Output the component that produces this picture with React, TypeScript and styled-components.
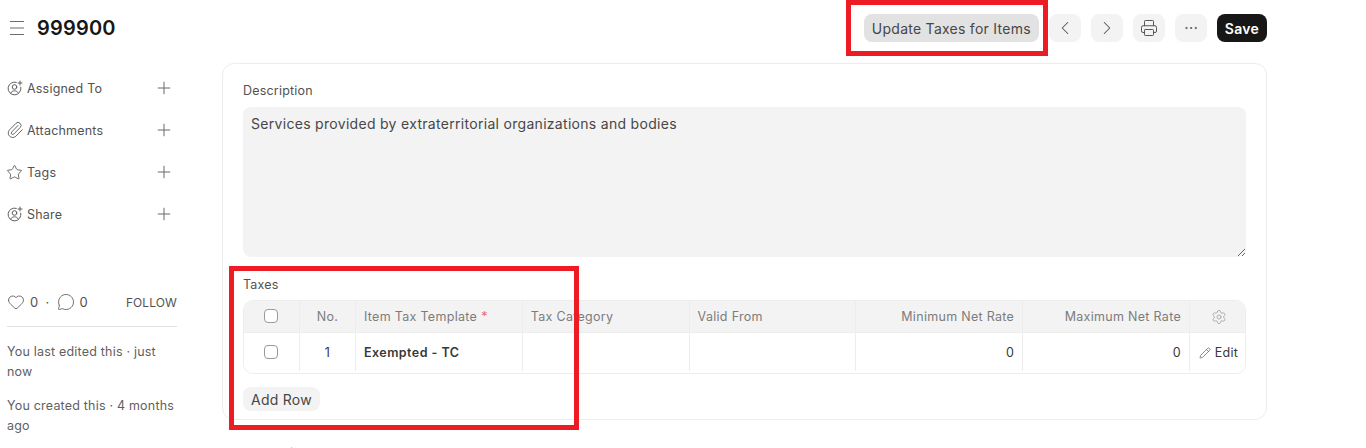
import { createGlobalStyle, styled } from "styled-components";
import { ChevronLeft, ChevronRight, Ellipsis, Heart, MessageCircle, Paperclip, Pencil, Plus, Printer, Settings, Star } from "lucide-react";

const GlobalStyle = createGlobalStyle`
  html, body {
    margin: 0;
    height: 448px;
    overflow: hidden;
    background: #fff;
    font-family: Inter, "Noto Sans", sans-serif;
    color: #383838;
  }
  * { box-sizing: border-box; }
`;

const Page = styled.div`
  position: relative;
  width: 1366px;
  height: 448px;
  overflow: hidden;
  padding-right: 99px;
`;

const Header = styled.header`
  height: 56px;
  display: flex;
  align-items: center;
  padding-left: 10px;
`;

const Title = styled.h1`
  margin: 0 0 0 13px;
  font-size: 20px;
  font-weight: 600;
  letter-spacing: 0.2px;
  color: #171717;
  flex: 1;
`;

const MenuButton = styled.span`
  display: flex;
  color: #6b6b6b;
`;

const Actions = styled.div`
  display: flex;
  gap: 10px;
`;

const Button = styled.button<{ $tone?: "active" | "dark" }>`
  height: 28px;
  padding: 0 8px;
  border: none;
  border-radius: 8px;
  display: flex;
  align-items: center;
  justify-content: center;
  font-family: inherit;
  font-size: 14px;
  letter-spacing: 0.26px;
  font-weight: ${(p) => (p.$tone === "dark" ? 600 : 400)};
  color: ${(p) => (p.$tone === "dark" ? "#fff" : "#474747")};
  background: ${(p) => (p.$tone === "dark" ? "#171717" : p.$tone === "active" ? "#e2e2e2" : "#f3f3f3")};
`;

const IconButton = styled(Button)`
  width: 32px;
  padding: 0;
  color: #525252;
`;

const Body = styled.div`
  display: flex;
  padding: 7px 0 0 7px;
`;

const Sidebar = styled.aside`
  width: 170px;
  flex: none;
  margin-right: 45px;
  padding-top: 4px;
`;

const SideRow = styled.div`
  height: 42px;
  display: flex;
  align-items: center;
  gap: 5px;
  font-size: 12.5px;
  letter-spacing: 0.2px;
  color: #525252;
`;

const SideIcon = styled.span`
  width: 15px;
  display: flex;
  justify-content: center;
  color: #5f5f5f;

  svg { flex: none; }
`;

const SideLabel = styled.span`
  flex: 1;
`;

const AddIcon = styled.span`
  display: flex;
  margin-right: 3px;
  color: #6b6b6b;
`;

const Stats = styled.div`
  margin-top: 50px;
  height: 42px;
  display: flex;
  align-items: center;
  gap: 5px;
  font-size: 13px;
  letter-spacing: 0.3px;
  color: #525252;
  border-bottom: 1px solid #e2e2e2;
  padding-bottom: 7px;

  svg { color: #525252; flex: none; }
`;

const Dot = styled.span`
  margin: 0 2px;
`;

const Follow = styled.span`
  margin-left: auto;
  font-size: 12px;
  letter-spacing: 0.1px;
`;

const Activity = styled.p`
  margin: 14px 0 0;
  font-size: 12.5px;
  line-height: 20px;
  letter-spacing: 0.2px;
  color: #5f5f5f;

  &:first-of-type { margin-top: 15px; }
`;

const Card = styled.main`
  flex: 1;
  height: 357px;
  border: 1px solid #ededed;
  border-radius: 12px;
  padding: 19px 20px;
`;

const Label = styled.div`
  font-size: 12.5px;
  line-height: 16px;
  letter-spacing: 0.2px;
  color: #525252;
  margin-bottom: 8px;
`;

const TextArea = styled.textarea`
  display: block;
  width: 100%;
  height: 150px;
  margin-bottom: 20px;
  padding: 7px 8px;
  border: none;
  border-radius: 8px;
  background: #f3f3f3;
  font-family: inherit;
  font-size: 14px;
  line-height: 19.5px;
  letter-spacing: 0.3px;
  color: #474747;
  outline: none;
`;

const TaxLabel = styled(Label)`
  margin-bottom: 7px;
`;

const Grid = styled.div`
  border: 1px solid #ededed;
  border-radius: 10px;
  overflow: hidden;
`;

const GridRow = styled.div<{ $head?: boolean }>`
  display: grid;
  grid-template-columns: 56px 56px repeat(5, 1fr) 55px;
  height: ${(p) => (p.$head ? "32px" : "40px")};
  padding-bottom: ${(p) => (p.$head ? "0" : "2px")};
  background: ${(p) => (p.$head ? "#f3f3f3" : "#fff")};
  color: ${(p) => (p.$head ? "#7c7c7c" : "#383838")};
  font-size: 12.5px;
  letter-spacing: 0.3px;
  ${(p) => p.$head && "border-bottom: 1px solid #ededed;"}
`;

const Cell = styled.div<{ $align?: "center" | "right"; $bold?: boolean }>`
  display: flex;
  align-items: center;
  gap: 4px;
  padding: ${(p) => (p.$align === "right" ? "0 8px" : "0 8px")};
  justify-content: ${(p) => (p.$align === "center" ? "center" : p.$align === "right" ? "flex-end" : "flex-start")};
  font-weight: ${(p) => (p.$bold ? 600 : 400)};
  letter-spacing: ${(p) => (p.$bold ? "0.45px" : "inherit")};
  border-right: 1px solid #ededed;

  &:last-child {
    padding: 0 6px 0 8px;
    border-right: none;
  }
  svg { flex: none; }
`;

const GearIcon = styled.span`
  display: flex;
  margin-top: 1px;
  color: #999;
`;

const EditIcon = styled.span`
  display: flex;
  margin-top: 1px;
  color: #5f5f5f;
`;

const Check = styled.span<{ $raised?: boolean }>`
  width: 14px;
  height: 14px;
  margin-right: 1px;
  margin-bottom: ${(p) => (p.$raised ? "2px" : "0")};
  border: 1px solid #9a9a9a;
  border-radius: 4px;
  background: #fff;
`;

const Required = styled.span`
  color: #e86c6c;
`;

const AddRow = styled(Button)`
  margin-top: 13px;
  height: 24px;
`;

const NextHeading = styled.h2`
  position: absolute;
  left: 224px;
  top: 444px;
  margin: 0;
  font-size: 16px;
  line-height: 20px;
  font-weight: 600;
  color: #171717;
`;

const Annotation = styled.div<{ $x: number; $y: number; $w: number; $h: number }>`
  position: absolute;
  left: ${(p) => p.$x}px;
  top: ${(p) => p.$y}px;
  width: ${(p) => p.$w}px;
  height: ${(p) => p.$h}px;
  border: 5px solid #ed1c24;
  pointer-events: none;
`;

const MenuLines = () => (
  <svg width="14" height="14" viewBox="0 0 14 14" fill="none" stroke="currentColor" strokeWidth="1">
    <path d="M0 .5h14M0 7h14M0 13.5h14" />
  </svg>
);

const UserAdd = () => (
  <svg width="16" height="16" viewBox="0 0 16 16" fill="none" stroke="currentColor" strokeWidth="1" strokeLinecap="round">
    <path d="M9.3 2.3A6.4 6.4 0 1 0 13.8 7.2" />
    <circle cx="7.5" cy="7" r="2.3" />
    <path d="M3.6 13.2C4.4 11.6 5.9 10.8 7.5 10.8S10.6 11.6 11.4 13.2" />
    <path d="M13 1v4M11 3h4" />
  </svg>
);

const sideItems = [
  { label: "Assigned To", icon: <UserAdd /> },
  { label: "Attachments", icon: <Paperclip size={18} strokeWidth={1.25} /> },
  { label: "Tags", icon: <Star size={17} strokeWidth={1.3} /> },
  { label: "Share", icon: <UserAdd /> },
];

const columns = ["Tax Category", "Valid From"];

export default function App() {
  return (
    <Page>
      <GlobalStyle />
      <Header>
        <MenuButton><MenuLines /></MenuButton>
        <Title>999900</Title>
        <Actions>
          <Button $tone="active">Update Taxes for Items</Button>
          <IconButton><ChevronLeft size={22} strokeWidth={1.1} /></IconButton>
          <IconButton><ChevronRight size={22} strokeWidth={1.1} /></IconButton>
          <IconButton><Printer size={18} strokeWidth={1.3} /></IconButton>
          <IconButton><Ellipsis size={16} strokeWidth={1.3} /></IconButton>
          <Button $tone="dark">Save</Button>
        </Actions>
      </Header>
      <Body>
        <Sidebar>
          {sideItems.map(({ label, icon }) => (
            <SideRow key={label}>
              <SideIcon>{icon}</SideIcon>
              <SideLabel>{label}</SideLabel>
              <AddIcon><Plus size={20} strokeWidth={1.2} /></AddIcon>
            </SideRow>
          ))}
          <Stats>
            <Heart size={18} strokeWidth={1.1} />
            <span>0</span>
            <Dot>·</Dot>
            <MessageCircle size={18} strokeWidth={1.1} />
            <span>0</span>
            <Follow>FOLLOW</Follow>
          </Stats>
          <Activity>You last edited this · just now</Activity>
          <Activity>You created this · 4 months ago</Activity>
        </Sidebar>
        <Card>
          <Label>Description</Label>
          <TextArea readOnly value="Services provided by extraterritorial organizations and bodies" />
          <TaxLabel>Taxes</TaxLabel>
          <Grid>
            <GridRow $head>
              <Cell $align="center"><Check $raised /></Cell>
              <Cell $align="center">No.</Cell>
              <Cell>Item Tax Template <Required>*</Required></Cell>
              {columns.map((c) => <Cell key={c}>{c}</Cell>)}
              <Cell $align="right">Minimum Net Rate</Cell>
              <Cell $align="right">Maximum Net Rate</Cell>
              <Cell $align="center"><GearIcon><Settings size={16} strokeWidth={1.1} /></GearIcon></Cell>
            </GridRow>
            <GridRow>
              <Cell $align="center"><Check /></Cell>
              <Cell $align="center">1</Cell>
              <Cell $bold>Exempted - TC</Cell>
              <Cell />
              <Cell />
              <Cell $align="right">0</Cell>
              <Cell $align="right">0</Cell>
              <Cell $align="center"><EditIcon><Pencil size={12} strokeWidth={1.4} /></EditIcon>Edit</Cell>
            </GridRow>
          </Grid>
          <AddRow>Add Row</AddRow>
        </Card>
      </Body>
      <NextHeading>Connections</NextHeading>
      <Annotation $x={846} $y={0} $w={202} $h={56} />
      <Annotation $x={229} $y={266} $w={350} $h={164} />
    </Page>
  );
}
